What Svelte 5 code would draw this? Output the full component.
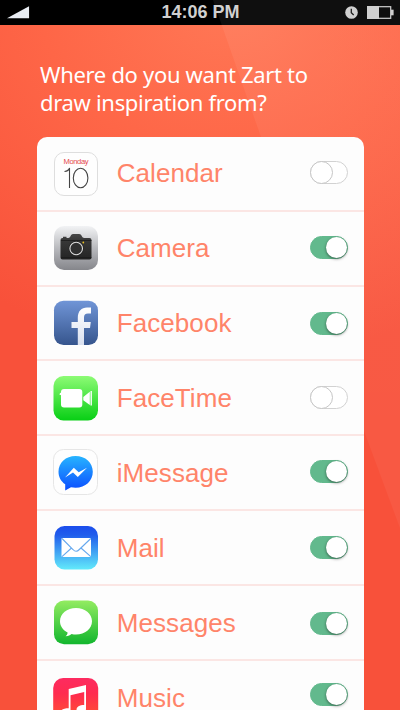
<script>
  const apps = [
    { id: 'calendar', name: 'Calendar', on: false, height: 75, icon: 15, label: 0, toggle: 24 },
    { id: 'camera', name: 'Camera', on: true, height: 75, icon: 14, label: 0, toggle: 24 },
    { id: 'facebook', name: 'Facebook', on: true, height: 74, icon: 14, label: 0, toggle: 24.5 },
    { id: 'facetime', name: 'FaceTime', on: false, height: 75, icon: 15, label: 1, toggle: 25 },
    { id: 'messenger', name: 'iMessage', on: true, height: 75, icon: 14, label: 1, toggle: 24 },
    { id: 'mail', name: 'Mail', on: true, height: 75, icon: 15, label: 1, toggle: 25 },
    { id: 'messages', name: 'Messages', on: true, height: 75, icon: 14, label: 1, toggle: 25.5 },
    { id: 'music', name: 'Music', on: true, height: 75, icon: 17, label: 1, toggle: 22 }
  ];
</script>

<div class="screen">
  <svg class="glare" viewBox="0 0 400 710" aria-hidden="true">
    <defs>
      <linearGradient id="shine" x1="0" y1="0" x2="0" y2="1">
        <stop offset="0" stop-color="#fff" stop-opacity=".06" />
        <stop offset="1" stop-color="#fff" stop-opacity=".045" />
      </linearGradient>
    </defs>
    <path d="M213 0H400V528L363 428Z" fill="url(#shine)" />
  </svg>

  <header class="status">
    <svg class="signal" viewBox="0 0 24 13"><path d="M0 12.5 23 0V12.5Z" fill="#e9edf3" /></svg>
    <span class="time">14:06 PM</span>
    <div class="indicators">
      <svg width="13" height="13" viewBox="0 0 13 13">
        <circle cx="6.5" cy="6.5" r="6.3" fill="#cdcdcd" />
        <path d="M6.3 2.8V6.7L8.7 9" fill="none" stroke="#111" stroke-width="1.3" />
      </svg>
      <svg width="27" height="13" viewBox="0 0 27 13">
        <rect x=".7" y=".7" width="23" height="11.6" fill="none" stroke="#cdcdcd" stroke-width="1.2" />
        <rect x="0" y="0" width="12" height="13" fill="#cdcdcd" />
        <rect x="24" y="3.7" width="2.6" height="5.6" fill="#cdcdcd" />
      </svg>
    </div>
  </header>

  <h1>Where do you want Zart to<br />draw inspiration from?</h1>

  <ul class="card">
    {#each apps as app (app.id)}
      <li style:height="{app.height}px">
        <svg class="icon" viewBox="0 0 44 44" style:margin-top="{app.icon}px">
          {#if app.id === 'calendar'}
            <rect x=".5" y=".5" width="43" height="43" rx="9.5" fill="#fefefe" stroke="#dedede" />
            <text x="22" y="12" text-anchor="middle" font-size="7.6" textLength="25" fill="#e5484c">Monday</text>
            <path d="M10.5 19.5C13.5 19.2 15 18 15.5 16V36" fill="none" stroke="#444" stroke-width="1.1" />
            <ellipse cx="26.6" cy="26" rx="7.3" ry="9.7" fill="none" stroke="#444" stroke-width="1.1" />
          {:else if app.id === 'camera'}
            <defs>
              <linearGradient id="cam" x1="0" y1="0" x2="0" y2="1"><stop stop-color="#f2f3f5" /><stop offset=".5" stop-color="#b9babe" /><stop offset="1" stop-color="#85868b" /></linearGradient>
              <linearGradient id="body" x1="0" y1="0" x2="0" y2="1"><stop stop-color="#484848" /><stop offset=".25" stop-color="#383838" /><stop offset="1" stop-color="#242424" /></linearGradient>
            </defs>
            <rect width="44" height="44" rx="10" fill="url(#cam)" />
            <path d="M6.5 14Q6.5 12 8.5 12H9V10.7H12.5V12H14.5Q16 11.8 17 9.3Q17.8 8 19.3 8H25Q26.5 8 27.3 9.3Q28.3 11.8 30 12H35.5Q37.5 12 37.5 14V31.5Q37.5 33.5 35.5 33.5H8.5Q6.5 33.5 6.5 31.5Z" fill="url(#body)" />
            <path d="M7 14.5H37.5M7 31.7H37.5" stroke="#171717" stroke-width=".7" />
            <circle cx="22.2" cy="22.5" r="7.6" fill="#252525" />
            <circle cx="22.2" cy="22.5" r="6.3" fill="#303030" stroke="#ddd" stroke-width="1.1" />
            <circle cx="29.3" cy="16.5" r=".9" fill="#e6bb22" />
          {:else if app.id === 'facebook'}
            <defs>
              <linearGradient id="fb" x1="0" y1="0" x2="0" y2="1"><stop stop-color="#7095d7" /><stop offset="1" stop-color="#36558d" /></linearGradient>
              <linearGradient id="fbf" x1="0" y1="0" x2="0" y2="1"><stop stop-color="#fff" /><stop offset="1" stop-color="#d9e0ef" /></linearGradient>
            </defs>
            <rect y="-.2" width="44" height="44.3" rx="9.5" fill="url(#fb)" />
            <path d="M23.8 44V27H17.5V21H23.8V17C23.8 10 27.5 6.5 33 6.5H37V12.5H34C31.2 12.5 30 13.8 30 16.5V21H36.8L36 27H30V44Z" fill="url(#fbf)" />
          {:else if app.id === 'facetime'}
            <defs><linearGradient id="ft" x1="0" y1="0" x2="0" y2="1"><stop stop-color="#8dfb75" /><stop offset="1" stop-color="#08cf15" /></linearGradient></defs>
            <rect x="-.5" y="0" width="44.5" height="44.5" rx="10" fill="url(#ft)" />
            <rect x="7" y="13" width="21.3" height="18.5" rx="3" fill="#fff" />
            <path d="M7.5 16.5Q5.5 16.5 5.5 18.8L7.5 19.2Z" fill="#fff" />
            <path d="M29.3 21 35.8 15.8V29L29.3 24.2Z" fill="#fff" /><path d="M37.2 15V29.5" stroke="#fff" stroke-width="1.4" />
          {:else if app.id === 'messenger'}
            <defs><linearGradient id="ms" x1="0" y1="0" x2="0" y2="1"><stop stop-color="#27b4ff" /><stop offset="1" stop-color="#0b4dff" /></linearGradient></defs>
            <rect x="-.5" y="-.5" width="44" height="45" rx="10" fill="#fefefe" stroke="#e6e6e6" />
            <path d="M21.5 6C11.8 6 4.5 12.8 4.5 21.7C4.5 27 7 31.2 11.2 34.3V40.5L17 37.2C18.5 37.5 20 37.7 21.5 37.7C31.5 37.7 38.8 30.8 38.8 21.7C38.8 12.8 31.5 6 21.5 6Z" fill="url(#ms)" />
            <path d="M11 27.5 19.8 17.8 24.7 22.3 33 17.8 23.8 27 19 22.6Z" fill="#fff" />
          {:else if app.id === 'mail'}
            <defs><linearGradient id="ml" x1="0" y1="0" x2="0" y2="1"><stop stop-color="#1b4dec" /><stop offset=".2" stop-color="#205cec" /><stop offset="1" stop-color="#62eafb" /></linearGradient></defs>
            <rect x=".5" y="0" width="43.5" height="43.5" rx="10" fill="url(#ml)" />
            <rect x="7.5" y="12" width="29.5" height="19" rx="1" fill="#fff" />
            <path d="M8 12.5 19 23.5Q22 27 25.3 23.5L36.8 12.5M8 30.7 17.5 22M36.8 30.7 27 22" fill="none" stroke="#65a8ee" stroke-width="1.1" />
          {:else if app.id === 'messages'}
            <defs><linearGradient id="mg" x1="0" y1="0" x2="0" y2="1"><stop stop-color="#93ec61" /><stop offset="1" stop-color="#12b62e" /></linearGradient></defs>
            <rect y=".5" width="44" height="43.7" rx="10" fill="url(#mg)" />
            <path d="M22 8C13 8 6 13.8 6 21.3C6 26 9 30.3 13.6 32.5C13.5 34.2 12.7 35.3 11.6 36.3C14.3 36.2 16.3 35 17.6 34C19 34.4 20.5 34.5 22 34.5C31 34.5 38 28.8 38 21.3C38 13.8 31 8 22 8Z" fill="#fff" />
          {:else}
            <defs><linearGradient id="mu" x1="0" y1="0" x2="0" y2="1"><stop stop-color="#fd2b60" /><stop offset=".35" stop-color="#ff2b4f" /><stop offset="1" stop-color="#ff5a2c" /></linearGradient></defs>
            <rect x="-.8" y="0" width="45" height="45" rx="10" fill="url(#mu)" />
            <path fill-rule="evenodd" d="M14.7 11 32 7V31C32 36 22.5 37 22.5 32C22.5 28.5 25.5 27 30.2 27V14L16.5 17.2V34C16.5 39 6.5 40 6.5 35C6.5 31.5 9.5 30.3 14.7 30.3Z" fill="#fff" />
          {/if}
        </svg>
        <span class="label" style:margin-top="{app.label}px">{app.name}</span>
        <span class="toggle" class:on={app.on} style:margin-top="{app.toggle}px"><i></i></span>
      </li>
    {/each}
  </ul>
</div>

<style>
  :global(body) {
    margin: 0;
    overflow: hidden;
  }
  .screen {
    position: relative;
    box-sizing: border-box;
    width: 400px;
    height: 710px;
    overflow: hidden;
    background: radial-gradient(ellipse 420px 360px at 230px 0, #ff7856 0%, #fe6647 45%, #f8513a 100%);
    font-family: 'Liberation Sans', Arial, sans-serif;
  }
  .glare {
    position: absolute;
    inset: 0;
    z-index: 1;
    width: 400px;
    height: 710px;
    pointer-events: none;
  }
  .status {
    display: grid;
    grid-template-columns: 1fr auto 1fr;
    align-items: center;
    box-sizing: border-box;
    height: 25px;
    padding: 0 6px 0 7px;
    background: #000;
  }
  .signal {
    width: 23px;
    height: 13px;
  }
  .time {
    color: #cfcfcf;
    font-size: 18px;
    font-weight: bold;
    line-height: 25px;
  }
  .indicators {
    display: flex;
    justify-content: flex-end;
    gap: 9px;
  }
  h1 {
    margin: 36px 0 0 40px;
    color: #fff;
    font: 400 22px/27.5px 'Noto Sans', sans-serif;
    letter-spacing: -0.31px;
    white-space: nowrap;
  }
  .card {
    position: relative;
    z-index: 2;
    box-sizing: border-box;
    width: 327px;
    height: 620px;
    margin: 21px 0 0 36.5px;
    padding: 0;
    list-style: none;
    overflow: hidden;
    border-radius: 10px 10px 0 0;
    background: #fdfdfd;
  }
  li {
    display: flex;
    align-items: flex-start;
    box-sizing: border-box;
    padding: 0 15.5px 0 17.5px;
    border-bottom: 2px solid #fbe6e4;
  }
  .icon {
    flex: none;
    width: 44px;
    height: 44px;
    overflow: visible;
  }
  .label {
    flex: 1;
    padding-left: 18.7px;
    color: #ff8469;
    font-size: 26px;
    letter-spacing: 0.08px;
    line-height: 73px;
  }
  .toggle {
    display: flex;
    flex: none;
    box-sizing: border-box;
    width: 38px;
    height: 23px;
    border: 1px solid #d2d2d2;
    border-radius: 12px;
    background: #fff;
  }
  .toggle i {
    box-sizing: border-box;
    width: 23px;
    height: 23px;
    margin: -1px;
    border: 1px solid #c6c6c6;
    border-radius: 50%;
    background: #fff;
  }
  .toggle.on {
    justify-content: flex-end;
    border-color: #62b98d;
    background: #62b98d;
  }
  .toggle.on i {
    width: 21px;
    height: 21px;
    margin: 0;
    border: 0;
    box-shadow: 0 1px 3px rgba(0, 0, 0, 0.5);
  }
</style>
